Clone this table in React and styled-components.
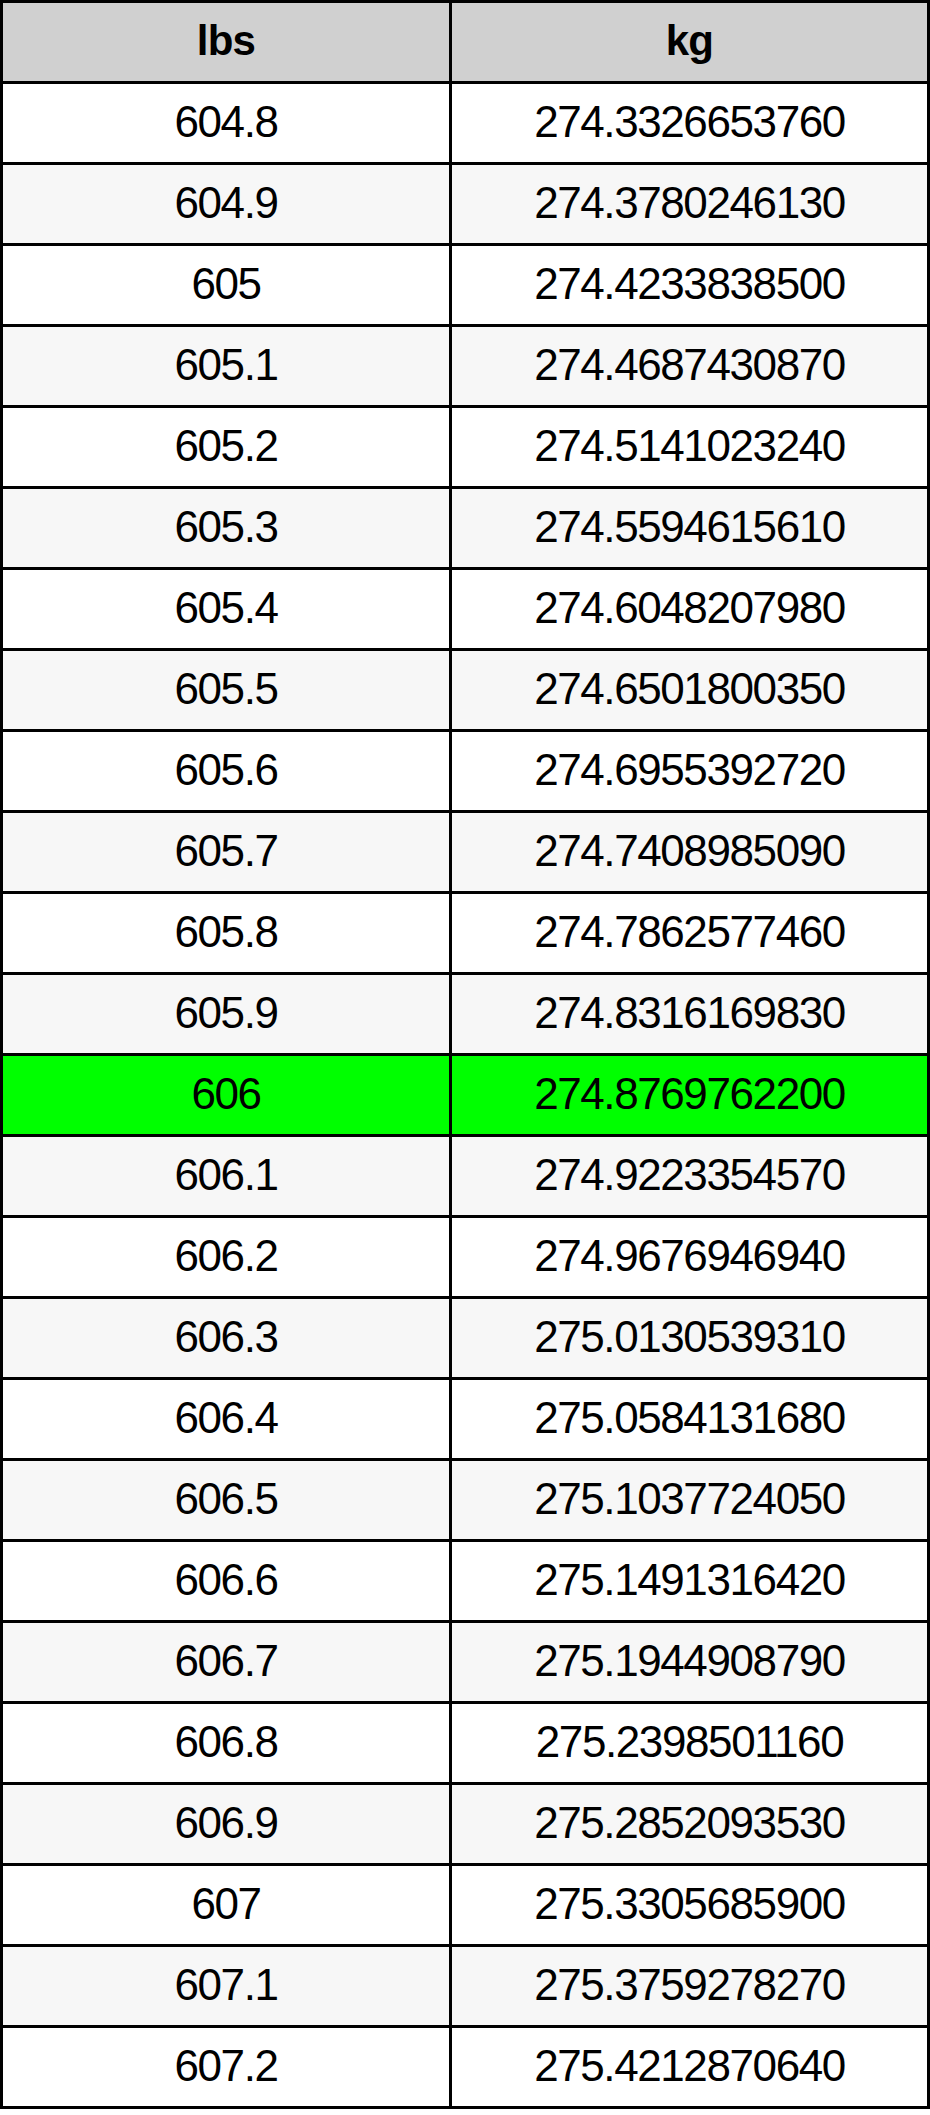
import React from "react";
import styled, { createGlobalStyle } from "styled-components";

const rows = [
  ["604.8", "274.3326653760"],
  ["604.9", "274.3780246130"],
  ["605", "274.4233838500"],
  ["605.1", "274.4687430870"],
  ["605.2", "274.5141023240"],
  ["605.3", "274.5594615610"],
  ["605.4", "274.6048207980"],
  ["605.5", "274.6501800350"],
  ["605.6", "274.6955392720"],
  ["605.7", "274.7408985090"],
  ["605.8", "274.7862577460"],
  ["605.9", "274.8316169830"],
  ["606", "274.8769762200"],
  ["606.1", "274.9223354570"],
  ["606.2", "274.9676946940"],
  ["606.3", "275.0130539310"],
  ["606.4", "275.0584131680"],
  ["606.5", "275.1037724050"],
  ["606.6", "275.1491316420"],
  ["606.7", "275.1944908790"],
  ["606.8", "275.2398501160"],
  ["606.9", "275.2852093530"],
  ["607", "275.3305685900"],
  ["607.1", "275.3759278270"],
  ["607.2", "275.4212870640"],
];

const GlobalStyle = createGlobalStyle`
  html, body {
    margin: 0;
    padding: 0;
    background: #fff;
  }
`;

const App = () => {
  return (
    <>
      <GlobalStyle />
      <Table>
        <Cell header>lbs</Cell>
        <Cell header>kg</Cell>
        {rows.map(([lbs, kg], i) => {
          const tone = lbs === "606" ? "hit" : i % 2 === 0 ? "even" : "odd";
          return (
            <React.Fragment key={lbs}>
              <Cell tone={tone}>{lbs}</Cell>
              <Cell tone={tone}>{kg}</Cell>
            </React.Fragment>
          );
        })}
      </Table>
    </>
  );
};

const tones = {
  even: "#ffffff",
  odd: "#f7f7f7",
  hit: "#00ff00",
};

const Table = styled.div`
  width: 930px;
  box-sizing: border-box;
  display: grid;
  grid-template-columns: 446px 1fr;
  grid-auto-rows: 78px;
  gap: 3px;
  padding: 3px;
  background-color: #000;
`;

const Cell = styled.div`
  display: flex;
  align-items: center;
  justify-content: center;
  padding-bottom: 3px;
  box-sizing: border-box;
  background-color: ${(p) => (p.header ? "#d0d0d0" : tones[p.tone])};
  font-family: "Liberation Sans", Arial, sans-serif;
  font-size: ${(p) => (p.header ? "42px" : "44px")};
  letter-spacing: ${(p) => (p.header ? "-0.8px" : "-1.4px")};
  font-weight: ${(p) => (p.header ? "bold" : "normal")};
  color: #000;
`;

export default App;
